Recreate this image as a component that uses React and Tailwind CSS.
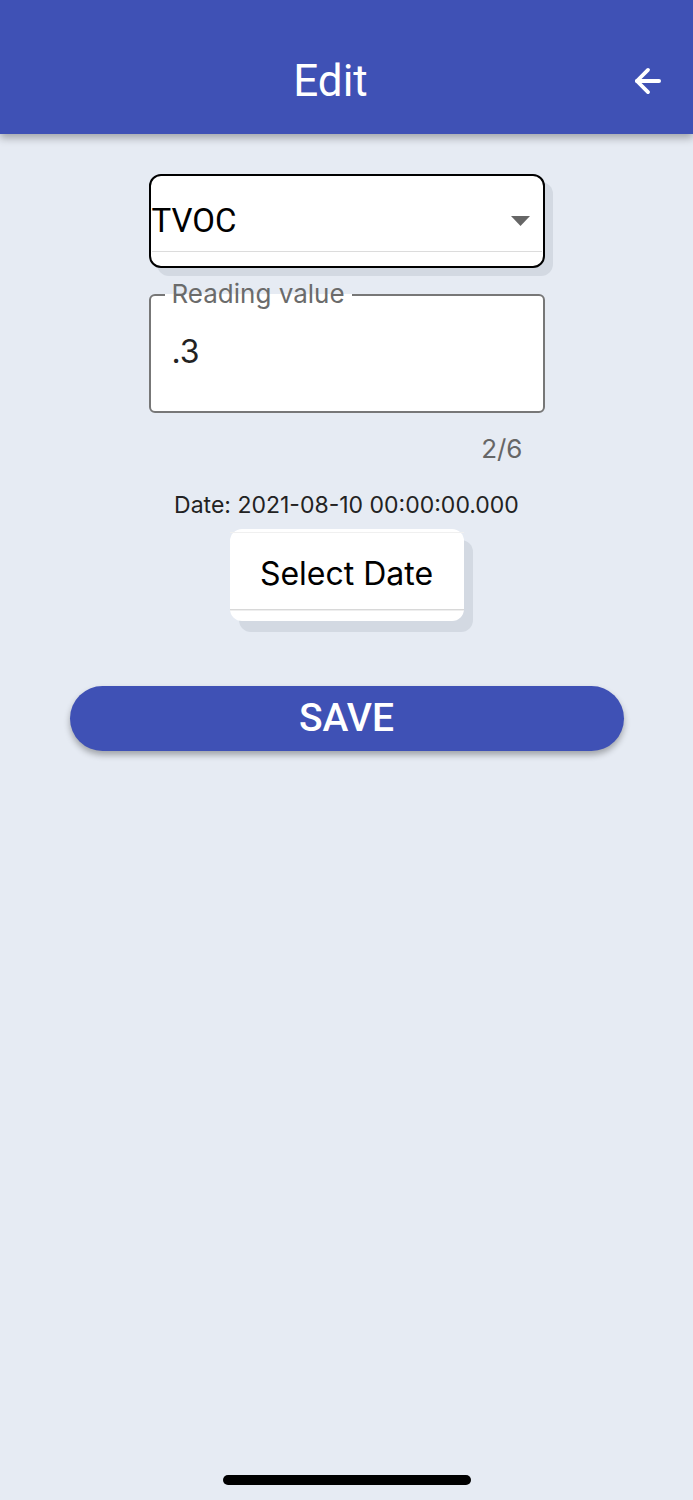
import { ArrowLeft } from "lucide-react";

const App = () => {
  return (
    <div className="relative w-[693px] h-[1500px] bg-[#e6ebf3] overflow-hidden font-['Roboto',sans-serif]">
      {/* Header */}
      <div className="relative h-[134px] bg-[#3f51b5] flex items-center justify-center shadow-[0_4px_8px_rgba(0,0,0,0.3)] z-10">
        <h1 className="text-white text-[44px] font-normal pt-[28px] ml-[-32px]">Edit</h1>
        <ArrowLeft className="absolute right-[26px] top-[62px] text-white" size={38} strokeWidth={2.4} />
      </div>

      <div className="flex flex-col items-center pt-[40px]">
        {/* Dropdown */}
        <div className="w-[396px] h-[94px] rounded-[12px] bg-white border-2 border-black shadow-[8px_8px_0_#d3d9e2] flex flex-col">
          <div className="flex-1 flex items-center justify-between pl-[1px] pr-[13px] pt-[14px]">
            <span className="text-[33px] leading-[36px] text-black">TVOC</span>
            <svg width="19" height="10" viewBox="0 0 19 10">
              <polygon points="0,0 19,0 9.5,10" fill="#666" />
            </svg>
          </div>
          <div className="h-[1px] bg-[#dcdcdc] mx-[1px] mb-[14px]" />
        </div>

        {/* Reading value */}
        <div className="relative mt-[26px] w-[396px] h-[119px] rounded-[6px] bg-white border-2 border-[#777] flex items-center pl-[21px]">
          <span className="absolute left-[14px] top-[-17px] px-[7px] bg-[linear-gradient(to_bottom,#e6ebf3_50%,white_50%)] text-[26px] leading-[30px] text-[#6b6b6b] font-['Inter',sans-serif]">
            Reading value
          </span>
          <span className="text-[32px] text-[#222] font-['Inter',sans-serif] mt-[-4px]">.3</span>
        </div>
        <div className="w-[396px] flex justify-end pr-[22px] mt-[16px]">
          <span className="text-[26px] text-[#666] font-['Inter',sans-serif]">2/6</span>
        </div>

        {/* Date */}
        <p className="mt-[20px] text-[23px] text-[#222] font-['Inter',sans-serif]">
          Date: 2021-08-10 00:00:00.000
        </p>

        <div className="mt-[6px] w-[234px] h-[92px] rounded-[12px] bg-white shadow-[9px_11px_0_#d3d9e2] flex flex-col">
          <div className="h-[4px] border-b border-[#f0f0f0]" />
          <div className="flex-1 flex items-center justify-center pt-[6px]">
            <span className="text-[32px] text-black font-['Inter',sans-serif]">Select Date</span>
          </div>
          <div className="h-[12px] border-t border-[#d8d8d8] shadow-[inset_0_1px_0_#eee]" />
        </div>

        {/* Save */}
        <button className="mt-[65px] w-[554px] h-[65px] rounded-full bg-[#3f51b5] shadow-[0_4px_6px_rgba(0,0,0,0.3)] text-white text-[39px] font-medium">
          SAVE
        </button>
      </div>

      {/* Home indicator */}
      <div className="absolute left-[223px] top-[1475px] w-[248px] h-[10px] rounded-full bg-black" />
    </div>
  );
};

export default App;
